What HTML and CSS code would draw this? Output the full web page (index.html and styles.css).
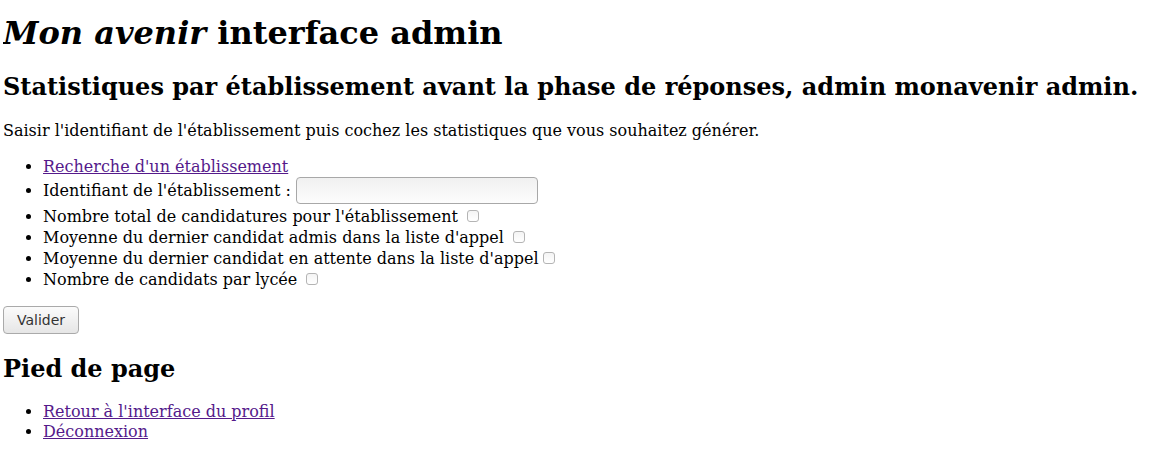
FILE: index.html
```html
<!DOCTYPE html>
<html lang="fr">
<head>
<meta charset="utf-8">
<title>Mon avenir interface admin</title>
<link rel="stylesheet" href="styles.css">
</head>
<body>
<h1><em>Mon avenir</em> interface admin</h1>
<h2>Statistiques par établissement avant la phase de réponses, admin monavenir admin.</h2>
<form class="form">
<p>Saisir l'identifiant de l'établissement puis cochez les statistiques que vous souhaitez générer.</p>
<ul class="list list-main">
<li><a href="#">Recherche d'un établissement</a></li>
<li>Identifiant de l'établissement : <input type="text" class="field"></li>
<li>Nombre total de candidatures pour l'établissement <input type="checkbox" class="check"></li>
<li>Moyenne du dernier candidat admis dans la liste d'appel <input type="checkbox" class="check"></li>
<li>Moyenne du dernier candidat en attente dans la liste d'appel<input type="checkbox" class="check"></li>
<li>Nombre de candidats par lycée <input type="checkbox" class="check"></li>
</ul>
<button type="button" class="btn">Valider</button>
</form>
<h2 class="foot-title">Pied de page</h2>
<ul class="list list-foot">
<li><a href="#">Retour à l'interface du profil</a></li>
<li><a href="#">Déconnexion</a></li>
</ul>
</body>
</html>
```
FILE: styles.css
```css
body {
  margin: 4px 3px;
  font-family: "DejaVu Serif", serif;
  font-size: 16px;
  color: #000;
  background: #fff;
}
a { color: #551a8b; }
h1 { font-size: 32px; margin: 10px 0; }
h2 { font-size: 24px; margin: 20px 0; }
.foot-title { margin-bottom: 19px; }
.list { padding-left: 40px; margin: 16px 0; }
.list-main li { line-height: 21px; }
.list-foot li { line-height: 20px; }
.field {
  width: 242px;
  height: 27px;
  margin: 0 0 2px;
  box-sizing: border-box;
  border: 1px solid #a8a8a8;
  border-radius: 4px;
  background: linear-gradient(#f0f0f0, #fdfdfd);
  vertical-align: middle;
}
.check {
  appearance: none;
  -webkit-appearance: none;
  box-sizing: border-box;
  width: 12px;
  height: 12px;
  margin: 0 3px 0 4px;
  vertical-align: baseline;
  border: 1px solid #b4b4b4;
  border-radius: 3px;
  background: linear-gradient(#f4f4f4, #fff);
}
.btn {
  font-family: "DejaVu Sans", sans-serif;
  font-size: 14px;
  padding: 4px 13px;
  height: 28px;
  border: 1px solid #aaa;
  border-radius: 4px;
  background: linear-gradient(#fbfbfb, #e6e6e6);
  color: #333;
}
```
